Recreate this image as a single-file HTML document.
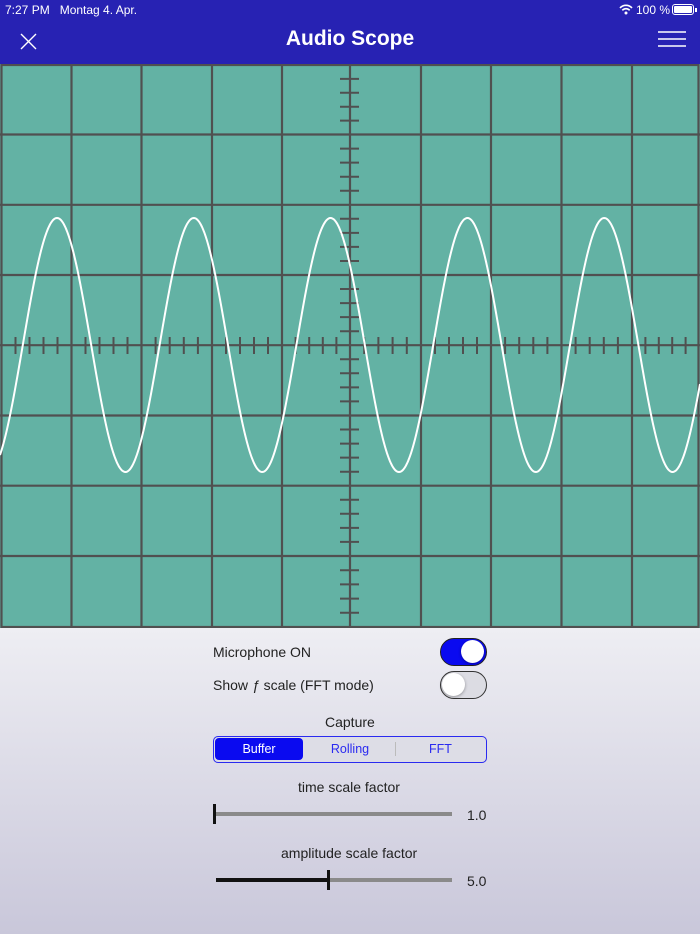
<!DOCTYPE html>
<html><head><meta charset="utf-8"><style>
*{margin:0;padding:0;box-sizing:border-box}
body{width:700px;height:934px;overflow:hidden;font-family:"Liberation Sans",sans-serif;position:relative;background:#fff}
.top{position:absolute;left:0;top:0;width:700px;height:64px;background:#2722b3;color:#fff}
.panel{position:absolute;left:0;top:628px;width:700px;height:306px;background:linear-gradient(#eeeef3,#c9c7da)}
.t{position:absolute;font-size:14px;color:#222;white-space:nowrap}
.tog{position:absolute;width:47px;height:28px;border-radius:14px;border:1.5px solid #333}
.knob{position:absolute;top:1px;width:23px;height:23px;border-radius:50%;background:#fff;box-shadow:0 1px 3px rgba(0,0,0,.35)}
</style></head><body>
<div class="top">
 <div style="position:absolute;left:5px;top:3px;font-size:12px">7:27 PM&nbsp;&nbsp;&nbsp;Montag 4. Apr.</div>
 <svg style="position:absolute;left:619px;top:4px" width="14" height="11" viewBox="0 0 14 11"><path d="M1 4 A8 8 0 0 1 13 4" stroke="#fff" stroke-width="1.6" fill="none"/><path d="M3.3 6.3 A5 5 0 0 1 10.7 6.3" stroke="#fff" stroke-width="1.6" fill="none"/><circle cx="7" cy="9" r="1.5" fill="#fff"/></svg>
 <div style="position:absolute;left:636px;top:3px;font-size:12px">100 %</div>
 <div style="position:absolute;left:672px;top:4px;width:22px;height:11px;border:1px solid #fff;border-radius:3px;padding:1px"><div style="background:#fff;width:100%;height:100%;border-radius:1px"></div></div>
 <div style="position:absolute;left:695px;top:8px;width:2px;height:4px;background:#fff"></div>
 <svg style="position:absolute;left:20px;top:33px" width="17" height="17"><path d="M1 1L16 16M16 1L1 16" stroke="#fff" stroke-width="1.4"/></svg>
 <div style="position:absolute;left:0;width:700px;top:27px;text-align:center;font-size:21px;font-weight:bold">Audio Scope</div>
 <svg style="position:absolute;left:658px;top:31px" width="28" height="16"><path d="M0 1H28M0 8H28M0 15H28" stroke="#fff" stroke-width="1.4"/></svg>
</div>
<svg style="position:absolute;left:0;top:64px" width="700" height="564" viewBox="0 64 700 564">
 <rect x="0" y="64" width="700" height="564" fill="#63b2a4"/>
 <g stroke="#505050" stroke-width="2.2" fill="none" id="grid">
  <rect x="1.5" y="65" width="697" height="562"/>
  <path d="M71.5 64V628M141.5 64V628M212 64V628M282 64V628M350 64V628M421 64V628M491 64V628M561.5 64V628M632 64V628"/>
  <path d="M0 134.5H700M0 204.8H700M0 275H700M0 345.2H700M0 415.5H700M0 485.7H700M0 556H700"/>
 </g>
 <g id="ticks" stroke="#505050" stroke-width="2"></g>
 <path id="wave" d="" stroke="#fff" stroke-width="2" fill="none"/>
</svg>
<div class="panel"></div>
<div class="t" style="left:213px;top:644px">Microphone ON</div>
<div class="tog" style="left:440px;top:638px;background:#0a0af0;border-color:#222"><div class="knob" style="left:20px"></div></div>
<div class="t" style="left:213px;top:677px">Show <i>ƒ</i> scale (FFT mode)</div>
<div class="tog" style="left:440px;top:671px;background:#dcdce3"><div class="knob" style="left:1px"></div></div>
<div class="t" style="left:325px;top:714px">Capture</div>
<div style="position:absolute;left:213px;top:736px;width:274px;height:27px;border:1.5px solid #2a2af0;border-radius:5px;background:#dddde6;font-size:12.5px;color:#2a2af0">
 <div style="position:absolute;left:1px;top:1px;width:88px;height:22px;background:#0a0af0;border-radius:4px;color:#fff;text-align:center;line-height:22px">Buffer</div>
 <div style="position:absolute;left:90px;top:1px;width:92px;text-align:center;line-height:22px">Rolling</div>
 <div style="position:absolute;left:181px;top:5px;width:1px;height:14px;background:#bbb"></div>
 <div style="position:absolute;left:182px;top:1px;width:89px;text-align:center;line-height:22px">FFT</div>
</div>
<div class="t" style="left:298px;top:779px">time scale factor</div>
<div style="position:absolute;left:215px;top:812px;width:237px;height:4px;background:#8a8a8a"></div>
<div style="position:absolute;left:213px;top:804px;width:3px;height:20px;background:#111"></div>
<div class="t" style="left:467px;top:807px">1.0</div>
<div class="t" style="left:281px;top:845px">amplitude scale factor</div>
<div style="position:absolute;left:216px;top:878px;width:236px;height:4px;background:#8a8a8a"></div>
<div style="position:absolute;left:216px;top:878px;width:112px;height:4px;background:#111"></div>
<div style="position:absolute;left:327px;top:870px;width:3px;height:20px;background:#111"></div>
<div class="t" style="left:467px;top:873px">5.0</div>
<script>
var d="";for(var x=0;x<=700;x+=1){var y=345-127*Math.cos(2*Math.PI*(x-57)/136.8);d+=(x?"L":"M")+x+" "+y.toFixed(1);}
document.getElementById("wave").setAttribute("d",d);
var t="",xs=[1.5,71.5,141.5,212,282,350,421,491,561.5,632,699];
for(var i=0;i<10;i++){for(var k=1;k<5;k++){var x=xs[i]+(xs[i+1]-xs[i])*k/5;t+="M"+x.toFixed(1)+" 337V354";}}
var ys=[65,134.5,204.8,275,345.2,415.5,485.7,556,627];
for(var i=0;i<8;i++){for(var k=1;k<5;k++){var y=ys[i]+(ys[i+1]-ys[i])*k/5;t+="M340 "+y.toFixed(1)+"H359";}}
var p=document.createElementNS("http://www.w3.org/2000/svg","path");p.setAttribute("d",t);document.getElementById("ticks").appendChild(p);
</script>
</body></html>
